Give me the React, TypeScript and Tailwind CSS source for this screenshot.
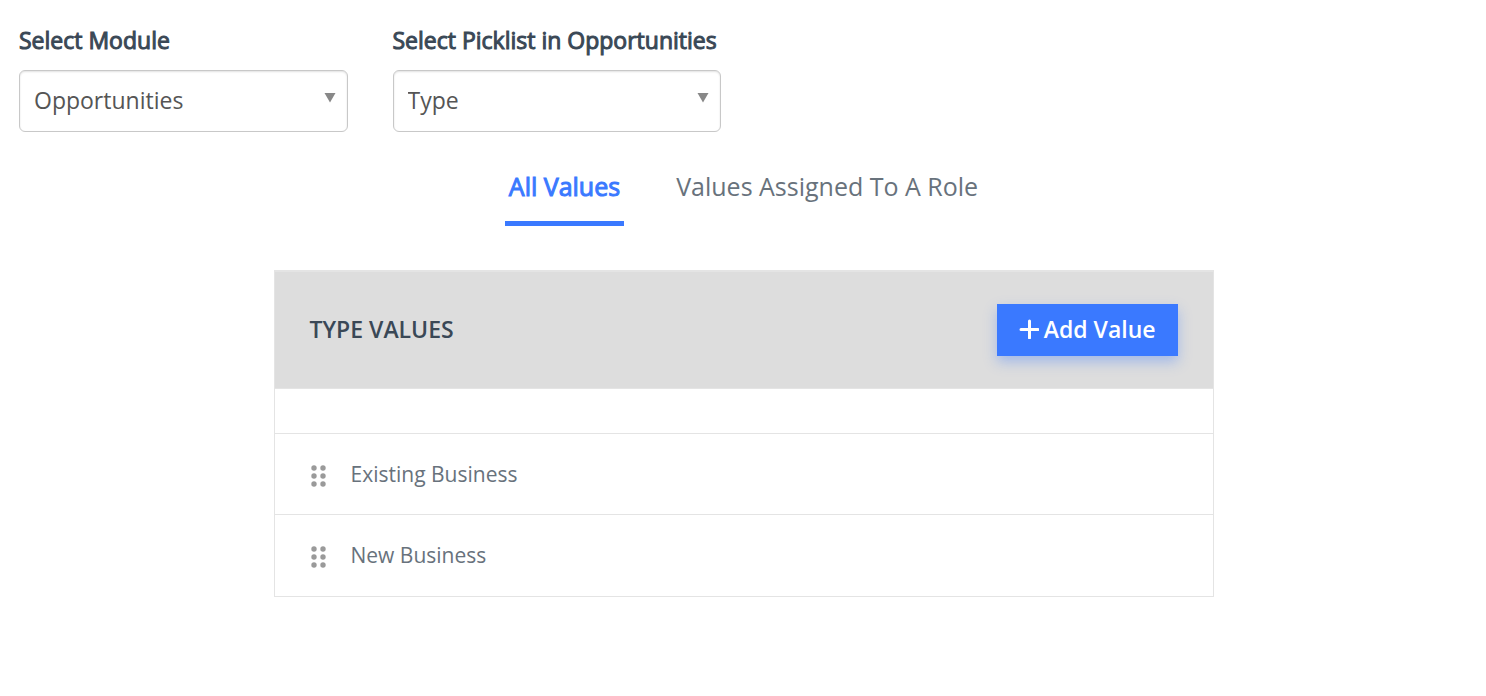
import { useState } from 'react';

const fields = [
  { id: 'module', label: 'Select Module', options: ['Opportunities', 'Leads', 'Contacts'] },
  { id: 'picklist', label: 'Select Picklist in Opportunities', options: ['Type', 'Sales Stage', 'Lead Source'] },
];

const tabs = ['All Values', 'Values Assigned To A Role'];

const values = ['Existing Business', 'New Business'];

function DragHandle() {
  return (
    <svg width="16" height="24" viewBox="0 0 16 24" fill="#9a9a9a" aria-hidden="true">
      {[5, 13, 21].map((y) => (
        <g key={y}>
          <circle cx="3" cy={y} r="2.7" />
          <circle cx="12" cy={y} r="2.7" />
        </g>
      ))}
    </svg>
  );
}

export default function PicklistSettings() {
  const [activeTab, setActiveTab] = useState(tabs[0]);

  return (
    <div className="bg-white pt-6 pr-[18px] pb-10 pl-[19px] font-['Open_Sans',sans-serif]">
      {/* Module and picklist */}
      <div className="grid grid-cols-4 gap-x-[45px]">
        {fields.map((field) => (
          <div key={field.id}>
            <label
              htmlFor={field.id}
              className="mb-[14px] block whitespace-nowrap text-[23px] leading-8 text-[#3a4856] [-webkit-text-stroke:1px_#3a4856]"
            >
              {field.label}
            </label>
            <div className="relative">
              <select
                id={field.id}
                className="h-[62px] w-full appearance-none rounded-md border border-[#c8c8c8] bg-white px-[14px] pb-[2px] text-[23px] text-[#555555] shadow-[inset_0_1px_2px_rgba(0,0,0,0.12)]"
              >
                {field.options.map((option) => (
                  <option key={option}>{option}</option>
                ))}
              </select>
              <svg
                className="pointer-events-none absolute top-[23px] right-3"
                width="12"
                height="10"
                viewBox="0 0 12 10"
                fill="#888888"
                aria-hidden="true"
              >
                <path d="M.5 0h11L6 9.5z" />
              </svg>
            </div>
          </div>
        ))}
      </div>

      {/* Tabs */}
      <div className="mt-9 flex justify-center gap-12">
        {tabs.map((tab) => (
          <button
            key={tab}
            onClick={() => setActiveTab(tab)}
            className={`border-b-5 px-1 pb-4 text-[25px] leading-[37px] ${
              tab === activeTab
                ? 'border-[#3a79ff] text-[#3a79ff] [-webkit-text-stroke:1px_#3a79ff]'
                : 'border-transparent text-[#68727c]'
            }`}
          >
            {tab}
          </button>
        ))}
      </div>

      {/* Values */}
      <div className="mx-auto mt-11 max-w-[940px] border border-[#e4e4e4]">
        <div className="flex h-[118px] items-center justify-between border-t border-b border-[#e4e4e4] bg-[#dddddd] px-[35px]">
          <h2 className="pb-[2px] text-[23px] font-semibold text-[#3a4856]">TYPE VALUES</h2>
          <button className="flex h-[52px] items-center gap-[5px] bg-[#3a79ff] px-[22px] pb-[2px] text-[23px] font-semibold text-white shadow-[0_6px_12px_rgba(58,121,255,0.35)]">
            <svg width="20" height="20" viewBox="0 0 20 20" stroke="currentColor" strokeWidth="3" strokeLinecap="round" aria-hidden="true">
              <path d="M10.5 2v17M2 10.5h17" />
            </svg>
            Add Value
          </button>
        </div>
        <div className="h-11" />
        <ul className="pb-px">
          {values.map((value) => (
            <li key={value} className="flex h-[81px] items-center gap-6 border-t border-[#e4e4e4] px-9 pt-[2px] text-[21px] text-[#68727c]">
              <DragHandle />
              {value}
            </li>
          ))}
        </ul>
      </div>
    </div>
  );
}
